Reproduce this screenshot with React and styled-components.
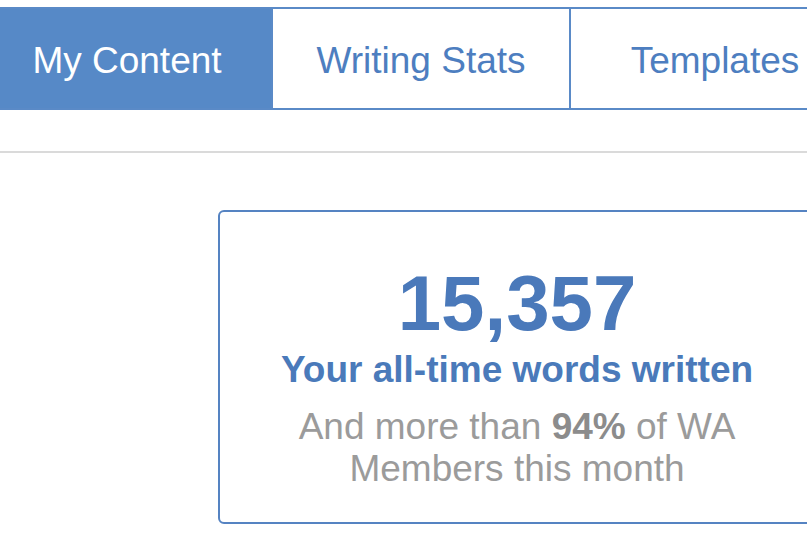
import styled, { createGlobalStyle } from 'styled-components'

// Styles
const GlobalStyle=createGlobalStyle`
    html, body {
        margin: 0;
        padding: 0;
        background: #fff;
        overflow: hidden;
        font-family: "Liberation Sans", Arial, sans-serif;
    }
`
const Page=styled.div`
    width: 807px;
    height: 546px;
    overflow: hidden;
    padding-top: 7px;
    box-sizing: border-box;
`
const TabBar=styled.div`
    display: flex;
    margin-left: -17px;
`
const Tab=styled.div`
    flex: 0 0 ${({width})=>width}px;
    box-sizing: border-box;
    height: 103px;
    display: flex;
    align-items: center;
    justify-content: center;
    padding-top: 4px;
    border: 2px solid #5a8ac7;
    border-left: none;
    background-color: ${({active})=>active ? '#5689c7' : '#fff'};
    color: ${({active})=>active ? '#fff' : '#4d7ec0'};
    font-size: 37px;
    white-space: nowrap;
`
const Divider=styled.div`
    height: 2px;
    background-color: #dadada;
    margin-top: 41px;
`
const StatCard=styled.div`
    box-sizing: border-box;
    width: 598px;
    margin: 57px 0 0 218px;
    padding: 52px 0 32px;
    border: 2px solid #5583c2;
    border-radius: 6px;
    display: flex;
    flex-direction: column;
    align-items: center;
    text-align: center;
`
const BigNumber=styled.div`
    font-size: 78px;
    line-height: 78px;
    font-weight: 700;
    color: #4a79ba;
`
const Caption=styled.div`
    margin-top: 8px;
    font-size: 37px;
    line-height: 40px;
    font-weight: 700;
    color: #4a7aba;
`
const Note=styled.p`
    margin: 16px 0 0;
    font-size: 37px;
    line-height: 42px;
    color: #9b9b9b;
    b {
        color: #8c8c8c;
    }
`

// Components
const tabs=[
    {name:'My Content',width:290},
    {name:'Writing Stats',width:298},
    {name:'Templates',width:290},
]

const App=()=>{
    return(
        <Page>
            <GlobalStyle />
            {/* Top tabs */}
            <TabBar>
                {tabs.map((tab,i)=>(
                    <Tab key={tab.name} width={tab.width} active={i===0}>{tab.name}</Tab>
                ))}
            </TabBar>
            <Divider />
            {/* Words written card */}
            <StatCard>
                <BigNumber>15,357</BigNumber>
                <Caption>Your all-time words written</Caption>
                <Note>
                    And more than <b>94%</b> of WA<br />
                    Members this month
                </Note>
            </StatCard>
        </Page>
    )
}

export default App;
